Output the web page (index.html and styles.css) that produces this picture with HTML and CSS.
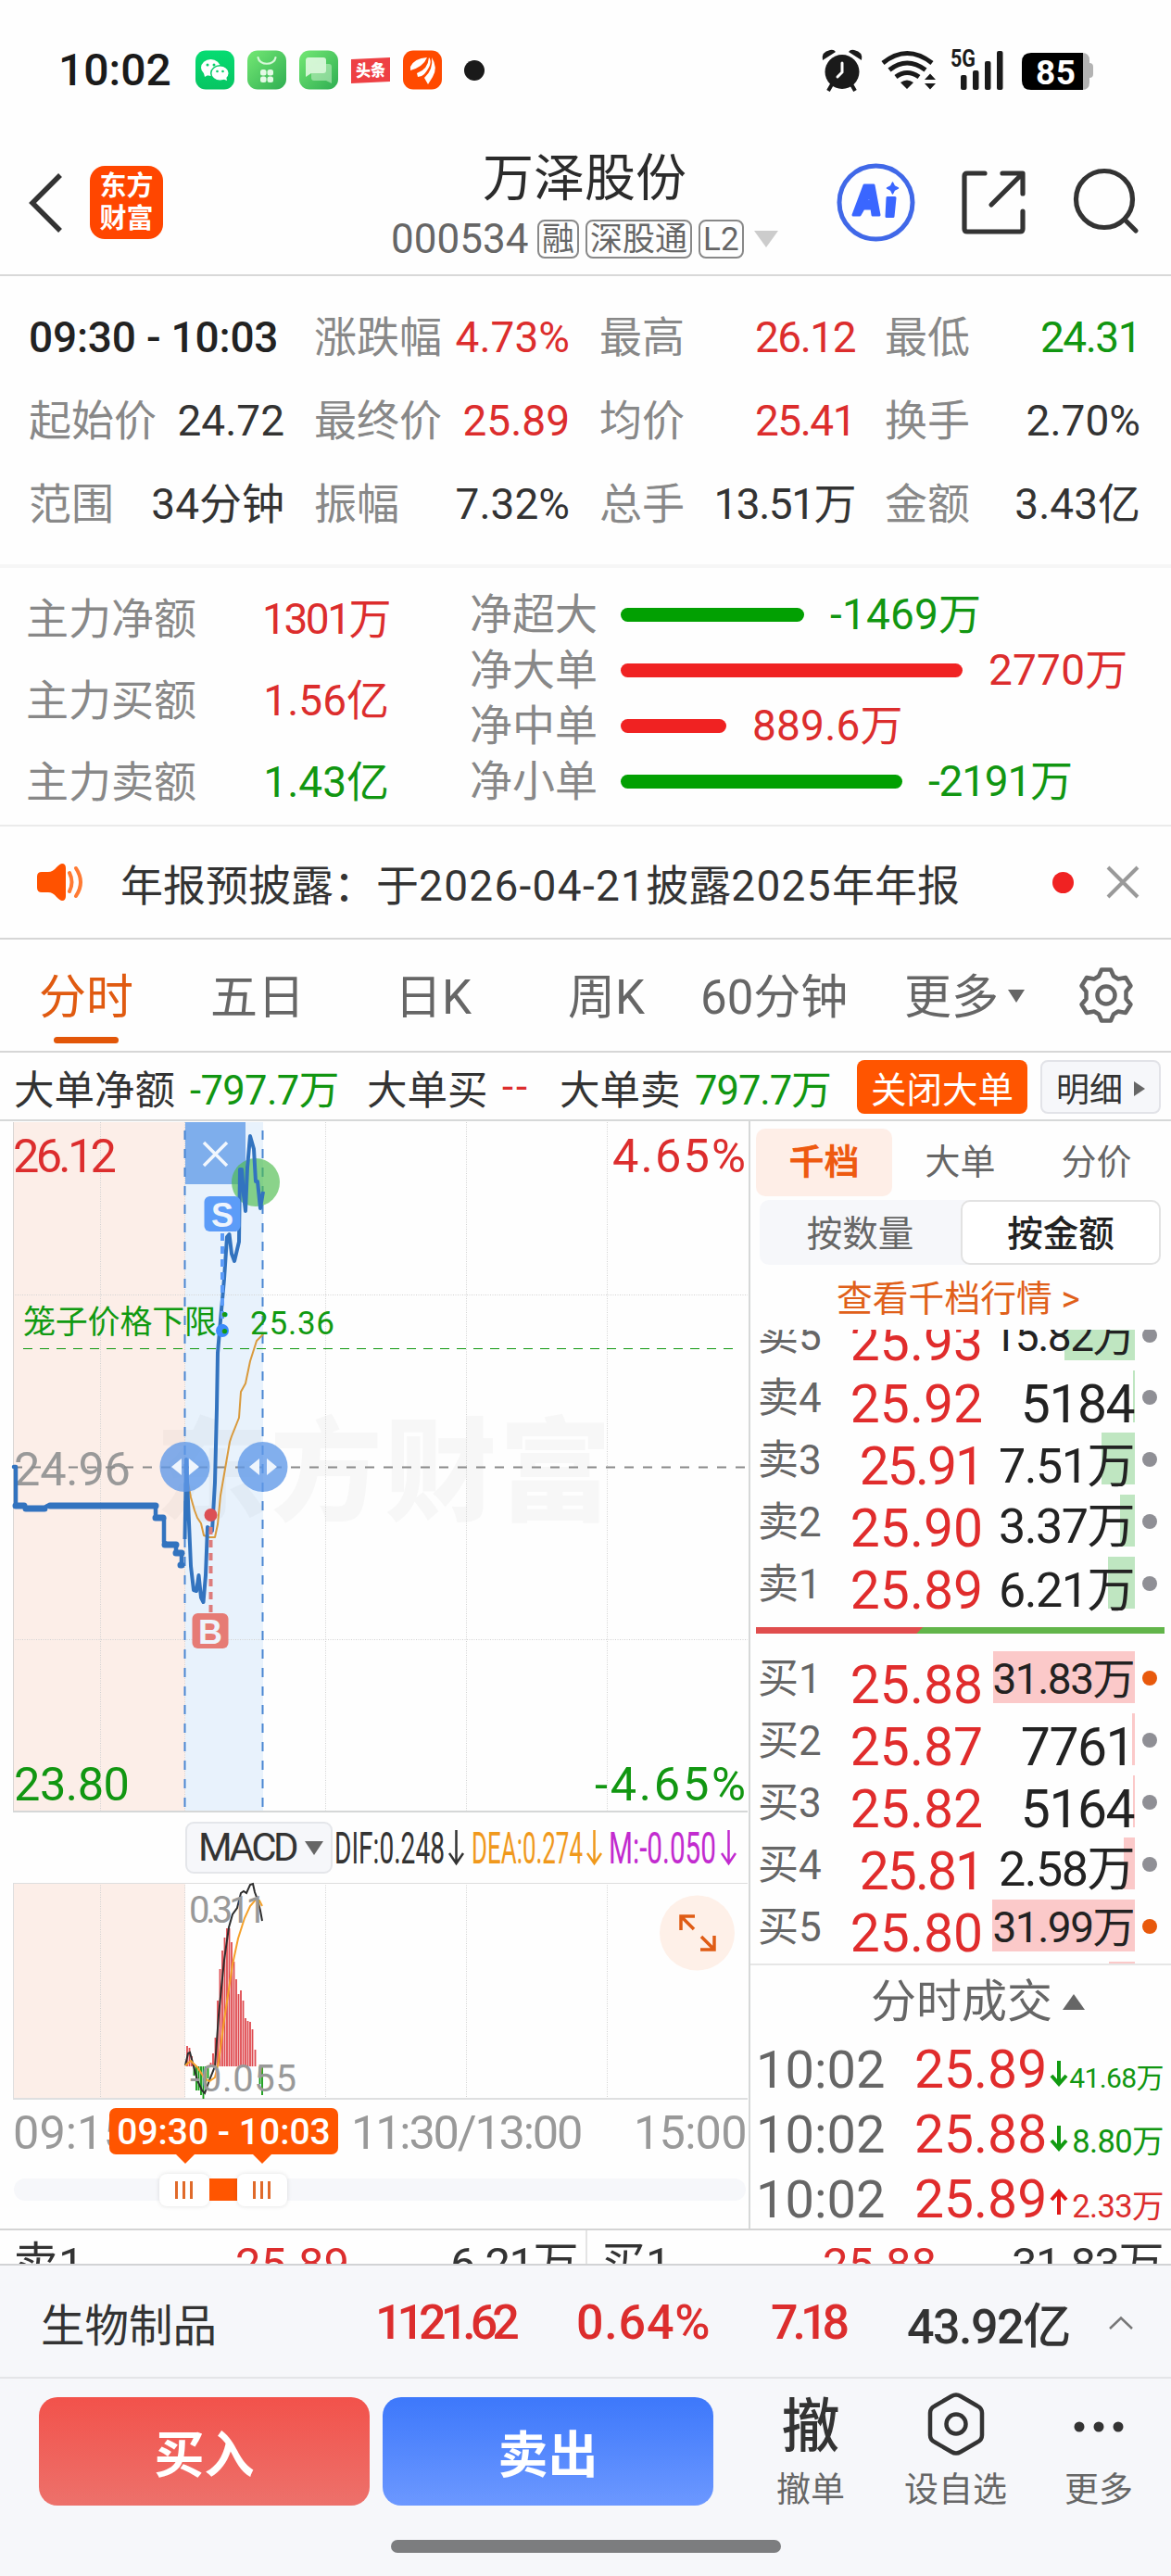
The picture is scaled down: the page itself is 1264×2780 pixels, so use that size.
FILE: index.html
```html
<!DOCTYPE html>
<html lang="zh-CN">
<head>
  <meta charset="UTF-8">
  <meta name="viewport" content="width=device-width, initial-scale=1.0">
  <title>万泽股份 000534</title>
  <link rel="stylesheet" href="styles.css">
</head>
<body>
  <!-- 状态栏 -->
  <div class="status">
    <span class="clock">10:02</span>
    <svg class="apps" width="312" height="44" viewBox="211 54 312 44">
      <defs>
        <linearGradient id="g1" x1="0" y1="0" x2="0" y2="1"><stop offset="0" stop-color="#06dc72"/><stop offset="1" stop-color="#07c562"/></linearGradient>
        <linearGradient id="g2" x1="0" y1="0" x2="1" y2="1"><stop offset="0" stop-color="#74e874"/><stop offset="1" stop-color="#2fae52"/></linearGradient>
      </defs>
      <rect x="211" y="54.500" width="42" height="42" rx="11" fill="url(#g1)"/>
      <g fill="#fff">
        <ellipse cx="227.500" cy="73" rx="10.500" ry="9"/>
        <path d="M220 79l1 4 5-3z"/>
        <ellipse cx="237.500" cy="79" rx="9.800" ry="8.200" stroke="#06cc69" stroke-width="1.500"/>
        <path d="M240 85l5 2-1-5z"/>
      </g>
      <g fill="#07cf6a"><circle cx="224" cy="70" r="1.500"/><circle cx="231" cy="70" r="1.500"/><circle cx="234.500" cy="77" r="1.300"/><circle cx="240.500" cy="77" r="1.300"/></g>
      <rect x="267" y="54.500" width="42" height="42" rx="11" fill="url(#g2)"/>
      <path d="M278.500 62c1.500 9 17.500 9 19 0" fill="none" stroke="#d6f7d8" stroke-width="2.200" stroke-linecap="round"/>
      <g fill="#e4f9e6"><rect x="281" y="75" width="6.500" height="6.500" rx="2.500"/><rect x="288.500" y="75" width="6.500" height="6.500" rx="2.500"/><rect x="281" y="82.500" width="6.500" height="6.500" rx="2.500"/><rect x="288.500" y="82.500" width="6.500" height="6.500" rx="2.500"/></g>
      <rect x="323" y="54.500" width="42" height="42" rx="11" fill="url(#g2)"/>
      <path d="M333 62h16q3 0 3 3v11q0 3-3 3h-13l-6 4V65q0-3 3-3z" fill="#e9fbe7" opacity=".85"/>
      <path d="M339 69h16q3 0 3 3v18l-6-3h-13q-3 0-3-3V72q0-3 3-3z" fill="#d5f5d6" opacity=".5"/>
      <path d="M379 64l42-2v26l-42 2z" fill="#ee4044"/>
      <text x="384" y="82.500" class="toutiao" textLength="32" lengthAdjust="spacingAndGlyphs" transform="rotate(-2 400 76)">头条</text>
      <rect x="435" y="54.500" width="42" height="42" rx="11" fill="#ff4a00"/>
      <path d="M443 72q4-9 18-10-4 10-18 14zM450 79q12-4 13-17 5 6-5 18-3 3-7 3zM458 84q10-9 8-22 7 11 1 21l-5 8z" fill="#fff"/>
      <circle cx="512" cy="76" r="11" fill="#1a1a1a"/>
    </svg>
    <svg class="signals" width="296" height="46" viewBox="886 53 296 46">
      <g fill="#1a1a1a">
        <circle cx="909" cy="77.500" r="18.500"/>
        <path d="M888 65q-2-9 8-11 4-1 6 2zM930 65q2-9-8-11-4-1-6 2z"/>
        <path d="M898 91l-4 7M919 91l4 7" stroke="#1a1a1a" stroke-width="4"/>
      </g>
      <path d="M909 68v10l-5 5" fill="none" stroke="#fff" stroke-width="3" stroke-linecap="round"/>
      <g fill="none" stroke="#1a1a1a" stroke-width="5">
        <path d="M953 68q26-21 53 0"/><path d="M960 75.500q19-15 39 0"/><path d="M967 83q12-9 25 0"/>
      </g>
      <path d="M972 89q7-5 14 0l-7 7zM998 86l6-6.500 6 6.500zM998 90h12l-6 6.500z" fill="#1a1a1a"/>
      <text x="1026" y="72" class="fiveg" textLength="27" lengthAdjust="spacingAndGlyphs">5G</text>
      <g fill="#1a1a1a"><rect x="1037" y="81" width="6.500" height="16" rx="2"/><rect x="1050" y="76" width="6.500" height="21" rx="2"/><rect x="1063" y="66" width="6.500" height="31" rx="2"/><rect x="1076" y="55" width="6.500" height="42" rx="2"/></g>
      <path d="M1160 57h8q8 0 8 8v3q4 0 4 4v8q0 4-4 4v5q0 8-8 8h-8z" fill="#b3b3b3"/>
      <path d="M1169 57h-56q-10 0-10 10v20q0 10 10 10h56z" fill="#000"/>
      <text x="1118" y="90.500" class="battery" textLength="43">85</text>
    </svg>
  </div>

  <!-- 标题栏 -->
  <header class="header">
    <svg class="back" width="40" height="66" viewBox="0 0 40 66"><path d="M35 3L5 33l30 30" fill="none" stroke="#333" stroke-width="5.500"/></svg>
    <div class="logo">东方<br>财富</div>
    <div class="title">
      <h1>万泽股份</h1>
      <div class="code">
        <span class="num">000534</span><i class="tag">融</i><i class="tag">深股通</i><i class="tag">L2</i>
        <svg width="26" height="18" viewBox="0 0 26 18"><path d="M0 0h26L13 18z" fill="#ccc"/></svg>
      </div>
    </div>
    <svg class="tools" width="330" height="86" viewBox="902 175 330 86">
      <circle cx="945.500" cy="218.500" r="39.500" fill="none" stroke="#4068e8" stroke-width="5"/>
      <g fill="#3a66ff" stroke="#3a66ff" stroke-width="3" stroke-linejoin="round">
        <path fill-rule="evenodd" d="M921 232l12-32h10l6 32h-7l-1-7h-9l-4 7zM935 217h5l-1-8z"/>
        <path d="M958 213.500h8l-2 20h-7z"/>
        <path d="M963.500 197l2 4 4 2-4 2-2 4-2-4-4-2 4-2z" stroke-width="1.500"/>
      </g>
      <g fill="none" stroke="#333" stroke-width="5.200" stroke-linecap="round" stroke-linejoin="round">
        <path d="M1063 187h-19q-3 0-3 3v57q0 3 3 3h57q3 0 3-3v-19M1082 187h22v22M1103 188l-33 33"/>
        <circle cx="1192" cy="215" r="30.500"/><path d="M1214 237l12 12"/>
      </g>
    </svg>
  </header>

  <!-- 区间统计 -->
  <section class="stats">
    <div><b>09:30 - 10:03</b></div>
    <div><label>涨跌幅</label><span class="up">4.73%</span></div>
    <div><label>最高</label><span class="up one">26.12</span></div>
    <div><label>最低</label><span class="down one">24.31</span></div>
    <div><label>起始价</label><span>24.72</span></div>
    <div><label>最终价</label><span class="up">25.89</span></div>
    <div><label>均价</label><span class="up one">25.41</span></div>
    <div><label>换手</label><span>2.70%</span></div>
    <div><label>范围</label><span>34分钟</span></div>
    <div><label>振幅</label><span>7.32%</span></div>
    <div><label>总手</label><span class="one">13.51万</span></div>
    <div><label>金额</label><span>3.43亿</span></div>
  </section>

  <!-- 资金流向 -->
  <section class="funds">
    <div class="main-force">
      <div><label>主力净额</label><span class="up ones">1301万</span></div>
      <div><label>主力买额</label><span class="up">1.56亿</span></div>
      <div><label>主力卖额</label><span class="down">1.43亿</span></div>
    </div>
    <div class="net">
      <div><label>净超大</label><i class="bg-down" style="width:198px"></i><span class="down">-1469万</span></div>
      <div><label>净大单</label><i class="bg-up" style="width:369px"></i><span class="up">2770万</span></div>
      <div><label>净中单</label><i class="bg-up" style="width:114px"></i><span class="up">889.6万</span></div>
      <div><label>净小单</label><i class="bg-down" style="width:304px"></i><span class="down ones">-2191万</span></div>
    </div>
  </section>

  <!-- 公告 -->
  <div class="notice">
    <svg width="54" height="42" viewBox="39 931 54 42"><path d="M45 941h7q5 0 9-5 4-4 6-4 4 0 4 5v30q0 5-4 5-2 0-6-4-4-5-9-5h-7q-5 0-5-5v-12q0-5 5-5z" fill="#ff5200"/><path d="M75 942q5 10 0 20M82 937q10 15 0 30" fill="none" stroke="#ff7a33" stroke-width="4" stroke-linecap="round"/></svg>
    <p>年报预披露：于<span>2026-04-21</span>披露<span>2025</span>年年报</p>
    <i class="dot"></i>
    <svg width="36" height="36" viewBox="0 0 36 36"><path d="M2 2l32 32M34 2L2 34" stroke="#999" stroke-width="4"/></svg>
  </div>

  <!-- 周期切换 -->
  <nav class="periods">
    <a class="active">分时</a><a>五日</a><a>日K</a><a>周K</a><a>60分钟</a>
    <a>更多<svg width="18" height="14" viewBox="0 0 18 14"><path d="M0 0h18L9 14z" fill="#666"/></svg></a>
    <svg class="gear" width="62" height="62" viewBox="-31 -31 62 62">
      <path d="M-5-27.500H5L8-20.500L13-17.500L21-19L26.500-10L21.500-4V4L26.500 10L21 19L13 17.500L8 20.500L5 27.500H-5L-8 20.500L-13 17.500L-21 19L-26.500 10L-21.500 4V-4L-26.500-10L-21-19L-13-17.500L-8-20.500Z" fill="none" stroke="#666" stroke-width="4.500" stroke-linejoin="round"/>
      <circle r="9.500" fill="none" stroke="#666" stroke-width="4.500"/>
    </svg>
  </nav>

  <!-- 大单统计 -->
  <div class="bigorder">
    <span>大单净额</span><span class="down">-797.7万</span>
    <span>大单买</span><span class="up">--</span>
    <span>大单卖</span><span class="down">797.7万</span>
    <button class="close-big">关闭大单</button>
    <button class="detail">明细<svg width="12" height="16" viewBox="0 0 12 16"><path d="M0 0l12 8-12 8z" fill="#666"/></svg></button>
  </div>

  <main class="board">
    <div class="charts">
      <!-- 分时图 -->
      <svg class="block" width="808" height="747" viewBox="0 1210 808 747">
        <rect x="14" y="1211" width="186" height="744" fill="#fceee8"/>
        <rect x="200" y="1211" width="84" height="744" fill="#e8f2fc"/>
        <text x="168" y="1631" class="watermark" textLength="492">东方财富</text>
        <g stroke="#d2d2d2" stroke-width="1" stroke-dasharray="1 1.500">
          <path d="M108.500 1211V1955M199.500 1211V1955M351.500 1211V1955M503.500 1211V1955M655.500 1211V1955M14 1397.500H807M14 1769.500H807"/>
        </g>
        <path d="M14.500 1211V1955" stroke="#d8d5d4"/>
        <path d="M14 1955H807" stroke="#d5d7d7" stroke-width="2"/>
        <text x="15" y="1603" class="axis muted" textLength="126">24.96</text>
        <path d="M14 1583.500H805" stroke="#8a8a8a" stroke-width="2" stroke-dasharray="10 10"/>
        <path d="M25 1455.500H793" stroke="#109810" stroke-width="1.200" stroke-dasharray="10 8"/>
        <rect x="200" y="1211" width="65" height="67" fill="#7eaeec"/>
        <path d="M220 1233l25 25M245 1233l-25 25" stroke="#f2f7fd" stroke-width="3.500"/>
        <path d="M199.500 1200V1955M283.500 1200V1955" stroke="#4a86d2" stroke-width="2" stroke-dasharray="10 10"/>
        <circle cx="276" cy="1276" r="26" fill="#4bbb4b" fill-opacity=".65"/>
        <g fill="none" stroke-linejoin="round">
          <path d="M15 1583H17V1625H25L28 1628H47L51 1625H168V1638H177V1664L181 1667H190V1676H196V1689" stroke="#3273bf" stroke-width="4.500" stroke-linecap="round"/>
          <path d="M54 1625H168" stroke="#3273bf" stroke-width="7" stroke-linecap="round"/>
          <path d="M17 1625h9M28 1628h20M168 1638h8M178 1667h12M190 1676h6M195 1689h1" stroke="#3273bf" stroke-width="7" stroke-linecap="round"/>
          <path d="M201 1590L206 1616L210 1630L213 1638L217 1644L220 1657L226 1659H232L235 1645L238 1614L243 1585L248 1556L250 1550L256 1535L258 1530L260 1502L265 1493L270 1469L277 1447L284 1440" stroke="#d99a3c" stroke-width="2"/>
          <path d="M199.500 1661L201 1575L203 1620L206 1690L209 1716L212 1717L214.500 1700L217 1724L219.500 1729L222 1700L224 1648L229 1652L232 1600L234 1520L235 1460L238 1425L242 1380L245 1335L247.500 1332L250 1353L253 1361L258 1340L259 1262H261L263 1290L265 1307L267 1260L270 1226L274 1240L276 1275H278L281 1304L284 1286" stroke="#3273bf" stroke-width="4"/>
        </g>
        <path d="M240 1331V1430" stroke="#5c9cf8" stroke-width="4" stroke-dasharray="8 6"/>
        <circle cx="240" cy="1436" r="7" fill="#3c8bfb"/>
        <rect x="220.500" y="1291" width="39" height="38" rx="6" fill="#5c9cf8"/>
        <text x="240" y="1323.500" class="badge">S</text>
        <path d="M227.500 1740V1642" stroke="#dd7c7c" stroke-width="4" stroke-dasharray="8 6"/>
        <circle cx="227.500" cy="1635" r="7" fill="#dc4f55"/>
        <rect x="207.500" y="1741" width="39" height="38" rx="6" fill="#e67b75"/>
        <text x="227" y="1773.500" class="badge">B</text>
        <g fill="#5f98e8" fill-opacity=".78"><circle cx="199.500" cy="1583" r="27"/><circle cx="283.500" cy="1583" r="27"/></g>
        <path d="M196 1574v18l-11-9zM204 1574v18l11-9zM280 1574v18l-11-9zM288 1574v18l11-9z" fill="#eef5fd"/>
        <text x="25" y="1439" class="cage" textLength="209">笼子价格下限</text>
        <text x="234" y="1439" class="cage">：</text>
        <text x="270" y="1440" class="cage" textLength="91">25.36</text>
        <text x="14" y="1265" class="axis up" textLength="112">26.12</text>
        <text x="15" y="1943" class="axis down" textLength="125">23.80</text>
        <text x="661" y="1265" class="axis up" textLength="144">4.65%</text>
        <text x="642" y="1943" class="axis down" textLength="163">-4.65%</text>
      </svg>

      <div class="macd-bar">
        <div class="picker"><span>MACD</span><svg width="20" height="15" viewBox="0 0 20 15"><path d="M0 0h20L10 15z" fill="#666"/></svg></div>
        <svg width="445" height="56" viewBox="360 1965 445 56">
          <g class="macd-num">
            <text x="362" y="2010" fill="#333" textLength="119" lengthAdjust="spacingAndGlyphs">DIF:0.248</text>
            <text x="510" y="2010" fill="#f0991c" textLength="120" lengthAdjust="spacingAndGlyphs">DEA:0.274</text>
            <text x="658" y="2010" fill="#c22bcf" textLength="116" lengthAdjust="spacingAndGlyphs">M:-0.050</text>
          </g>
          <g fill="none" stroke-width="2.500">
            <path d="M493.500 1974V2009M486 1999L493.500 2010L501 1999" stroke="#333"/>
            <path d="M642.500 1974V2009M635 1999L642.500 2010L650 1999" stroke="#f0991c"/>
            <path d="M787.500 1974V2009M780 1999L787.500 2010L795 1999" stroke="#c22bcf"/>
          </g>
        </svg>
      </div>

      <!-- MACD 副图 -->
      <svg class="block" width="808" height="236" viewBox="0 2031 808 236">
        <rect x="14" y="2032" width="186" height="233" fill="#fceee8"/>
        <path d="M108.500 2032V2265M199.500 2032V2265M351.500 2032V2265M503.500 2032V2265M655.500 2032V2265" stroke="#d2d2d2" stroke-dasharray="1 1.500"/>
        <path d="M14 2032.500H807M14.500 2032V2265" stroke="#dedede"/>
        <path d="M14 2265H807" stroke="#dedfe0" stroke-width="2"/>
        <path stroke="#df4a4f" stroke-width="1.800" d="M202 2230V2208M204.500 2230V2210M207 2230V2219M227.500 2230V2226M230 2230V2216M232.500 2230V2199M235 2230V2159M237.500 2230V2125M240 2230V2105M242.500 2230V2091M245 2230V2081M247.500 2230V2081M250 2230V2096M252.500 2230V2117M255 2230V2136M257.500 2230V2152M260 2230V2148M262.500 2230V2159M265 2230V2178M267.500 2230V2181M270 2230V2182M272.500 2230V2190M275.500 2230V2212"/>
        <path stroke="#119a11" stroke-width="1.800" d="M209.500 2230V2240M212 2230V2256M214.500 2230V2256M217 2230V2261M219.500 2230V2265M222 2230V2254M224.500 2230V2243M280.500 2230V2249M283 2230V2261"/>
        <path d="M200 2229L203 2216L205 2215L208 2226L213 2245L218 2256L221 2259L226 2245L232 2230L236 2175L242 2115L247 2080L251 2066L256 2059L260 2043L263 2041L266 2043L270 2034L273 2033L275 2042L278 2050L281 2062L283 2073" fill="none" stroke="#2d2d2d" stroke-width="2"/>
        <path d="M200 2229L206 2224L213 2231L221 2243L226 2246L232 2242L236 2225L242 2180L251 2120L257 2092L264 2070L270 2057L276 2050L280 2051L283 2057" fill="none" stroke="#f5a12b" stroke-width="2"/>
        <text x="204" y="2075" class="subaxis" textLength="84">0.311</text>
        <text x="205" y="2257" class="subaxis" textLength="115">-0.055</text>
        <circle cx="752.500" cy="2086" r="40.500" fill="#fef0e8"/>
        <path d="M735 2083V2068H750M736 2069L749 2082M771 2089V2104H756M770 2103L757 2090" fill="none" stroke="#df5c15" stroke-width="3.500"/>
      </svg>

      <div class="times">
        <span class="t1">09:15</span><span class="t2">11:30/13:00</span><span class="t3">15:00</span>
        <div class="tip">09:30 - 10:03</div>
      </div>
      <div class="slider"><i class="grip"></i><i class="fill"></i><i class="grip"></i></div>
    </div>

    <!-- 盘口 -->
    <aside class="depth">
      <div class="tabs"><b>千档</b><span>大单</span><span>分价</span></div>
      <div class="segment"><span>按数量</span><b>按金额</b></div>
      <a class="link">查看千档行情 &gt;</a>
      <div class="book sell">
        <div class="row"><label>卖5</label><em>25.93</em><span class="s"><i style="width:76px"></i><u>15.82万</u></span><s></s></div>
        <div class="row"><label>卖4</label><em>25.92</em><span><i style="width:2px"></i><u>5184</u></span><s></s></div>
        <div class="row"><label>卖3</label><em class="one">25.91</em><span class="m l"><i style="width:36px"></i><u>7.51万</u></span><s></s></div>
        <div class="row"><label>卖2</label><em>25.90</em><span class="m"><i style="width:16px"></i><u>3.37万</u></span><s></s></div>
        <div class="row"><label>卖1</label><em>25.89</em><span class="m l"><i style="width:29px"></i><u>6.21万</u></span><s></s></div>
      </div>
      <div class="ratio"></div>
      <div class="book buy">
        <div class="row"><label>买1</label><em>25.88</em><span class="s"><i style="width:153px"></i><u>31.83万</u></span><s class="hot"></s></div>
        <div class="row"><label>买2</label><em>25.87</em><span><i style="width:3px"></i><u>7761</u></span><s></s></div>
        <div class="row"><label>买3</label><em>25.82</em><span><i style="width:2px"></i><u>5164</u></span><s></s></div>
        <div class="row"><label>买4</label><em class="one">25.81</em><span class="m"><i style="width:12px"></i><u>2.58万</u></span><s></s></div>
        <div class="row"><label>买5</label><em>25.80</em><span class="s"><i style="width:154px"></i><u>31.99万</u></span><s class="hot"></s></div>
        <div class="row"><label></label><em></em><span><i style="width:28px"></i></span></div>
      </div>
      <div class="trades">
        <h2>分时成交<svg width="24" height="17" viewBox="0 0 24 17"><path d="M0 17h24L12 0z" fill="#666"/></svg></h2>
        <div><label>10:02</label><em>25.89</em><svg width="20" height="28" viewBox="0 0 20 28"><path d="M10 0V25M2 16L10 25L18 16" fill="none" stroke="#119a11" stroke-width="4"/></svg><span class="down xs">41.68万</span></div>
        <div><label>10:02</label><em>25.88</em><svg width="20" height="28" viewBox="0 0 20 28"><path d="M10 0V25M2 16L10 25L18 16" fill="none" stroke="#119a11" stroke-width="4"/></svg><span class="down">8.80万</span></div>
        <div><label>10:02</label><em>25.89</em><svg width="20" height="28" viewBox="0 0 20 28"><path d="M10 28V3M2 12L10 3L18 12" fill="none" stroke="#e01818" stroke-width="4"/></svg><span class="up">2.33万</span></div>
      </div>
    </aside>
  </main>

  <div class="best">
    <div><span>卖1</span><em>25.89</em><span>6.21万</span></div>
    <div><span>买1</span><em>25.88</em><span>31.83万</span></div>
  </div>

  <!-- 底部 -->
  <footer class="footer">
    <div class="sector">
      <span class="name">生物制品</span>
      <b class="up idx">1121.62</b><b class="up pct">0.64%</b><b class="up chg">7.18</b><b class="amt">43.92亿</b>
      <svg width="28" height="16" viewBox="0 0 28 16"><path d="M2 14L14 2.500L26 14" fill="none" stroke="#777" stroke-width="2.500"/></svg>
    </div>
    <div class="actions">
      <button class="buy-btn">买入</button>
      <button class="sell-btn">卖出</button>
      <div class="act a1"><strong>撤</strong><small>撤单</small></div>
      <div class="act a2">
        <svg width="62" height="68" viewBox="-31 -34 62 68"><path d="M-5-30Q0-33 5-30L23-19.500Q28-17 28-12V12Q28 17 23 19.500L5 30Q0 33-5 30L-23 19.500Q-28 17-28 12V-12Q-28-17-23-19.500Z" fill="none" stroke="#333" stroke-width="4.500"/><circle r="10.500" fill="none" stroke="#333" stroke-width="4.500"/></svg>
        <small>设自选</small>
      </div>
      <div class="act a3">
        <svg width="56" height="68" viewBox="0 -34 56 68"><g fill="#333"><circle cx="7" cy="3" r="5.500"/><circle cx="28" cy="3" r="5.500"/><circle cx="49" cy="3" r="5.500"/></g></svg>
        <small>更多</small>
      </div>
    </div>
    <div class="home"></div>
  </footer>
</body>
</html>
```
FILE: styles.css
```css
* {
  box-sizing: border-box;
}
body {
  margin: 0;
  width: 1264px;
  height: 2780px;
  background: #fefefe;
  color: #333;
  font-family: Roboto, "Noto Sans CJK SC", sans-serif;
  font-size: 46px;
}
i, em {
  font-style: normal;
}
u, s {
  text-decoration: none;
}
svg {
  flex: none;
}
.block {
  display: block;
}
label {
  color: #888;
}
.up {
  color: #dc2d2d;
  fill: #dc2d2d;
}
.down {
  color: #119611;
  fill: #119611;
}
.bg-up {
  background: #f02222;
}
.bg-down {
  background: #02a002;
}
button {
  border: none;
  padding: 0;
  font-family: inherit;
}

/* 状态栏 */
.status {
  height: 152px;
  padding-top: 53px;
  display: flex;
}
.clock {
  width: 211px;
  padding-left: 63px;
  font-size: 48px;
  font-weight: 500;
  line-height: 46px;
  color: #1a1a1a;
}
.apps {
  margin-top: 1px;
}
.signals {
  margin-left: 363px;
}
.toutiao {
  font-size: 18px;
  font-weight: 900;
  fill: #fff;
}
.fiveg {
  font-size: 25px;
  font-weight: 700;
  fill: #1a1a1a;
}
.battery {
  font-size: 37px;
  font-weight: 700;
  fill: #fff;
}

/* 标题栏 */
.header {
  height: 146px;
  display: flex;
  border-bottom: 2px solid #d8d8d8;
}
.back {
  margin: 34px 0 0 30px;
}
.logo {
  margin: 27px 0 0 27px;
  width: 79px;
  height: 79px;
  padding-top: 5px;
  border-radius: 16px;
  background: #ff4600;
  color: #fff;
  font-size: 29px;
  font-weight: 700;
  line-height: 35px;
  text-align: center;
}
.title {
  margin-left: 246px;
  width: 426px;
}
.title h1 {
  margin: 10px 0 0 99px;
  font-size: 55px;
  font-weight: 400;
  line-height: 60px;
  color: #2b2b2b;
}
.code {
  display: flex;
  align-items: center;
  margin-top: 15px;
  height: 42px;
}
.code .num {
  font-size: 44px;
  color: #666;
  width: 158px;
}
.tag {
  height: 42px;
  margin-right: 7px;
  padding: 0 3px;
  border: 2px solid #888;
  border-radius: 8px;
  font-size: 35px;
  line-height: 39px;
  color: #666;
}
.code svg {
  margin-left: 4px;
}
.tools {
  margin: 23px 0 0 54px;
}

/* 区间统计 */
.stats {
  height: 315px;
  padding: 21px 34px 0 31px;
  display: grid;
  grid-template-columns: repeat(4, 276px);
  grid-auto-rows: 90px;
  column-gap: 32px;
  border-bottom: 4px solid #f6f6f6;
}
.stats div {
  display: flex;
  justify-content: space-between;
  line-height: 90px;
  white-space: nowrap;
}
.stats b {
  font-weight: 500;
  letter-spacing: -.2px;
  color: #222;
}
.stats .one {
  letter-spacing: -1.500px;
}

/* 资金流向 */
.funds {
  height: 279px;
  display: flex;
  border-bottom: 2px solid #ebebeb;
}
.main-force {
  width: 507px;
  padding: 11px 87px 0 28px;
}
.main-force div {
  height: 88px;
  line-height: 88px;
  display: flex;
  justify-content: space-between;
}
.ones {
  letter-spacing: -2.500px;
}
.net {
  padding-top: 20px;
}
.net div {
  height: 60px;
  line-height: 62px;
  display: flex;
  align-items: center;
}
.net label {
  width: 163px;
}
.net i {
  height: 15px;
  border-radius: 8px;
  margin-right: 28px;
}
.net span {
  letter-spacing: .2px;
}
.net .ones {
  letter-spacing: -1.200px;
}

/* 公告 */
.notice {
  height: 122px;
  padding: 0 34px 0 39px;
  display: flex;
  align-items: center;
  border-bottom: 2px solid #d6d6d6;
}
.notice p {
  margin: 0 0 0 37px;
  width: 1007px;
  white-space: nowrap;
}
.notice p span {
  letter-spacing: 1.300px;
}
.notice .dot {
  width: 23px;
  height: 23px;
  border-radius: 50%;
  background: #f02222;
  margin-right: 35px;
}

/* 周期 */
.periods {
  height: 122px;
  display: flex;
  align-items: center;
  border-bottom: 2px solid #d6d6d6;
  font-size: 51px;
  color: #666;
}
.periods a {
  position: relative;
  line-height: 120px;
  padding-top: 5px;
  white-space: nowrap;
  width: 189px;
  padding-left: 2px;
}
.periods a:nth-child(1) {
  width: 225px;
  padding-left: 42px;
}
.periods a:nth-child(2) {
  width: 199px;
}
.periods a:nth-child(4) {
  width: 142px;
  padding-left: 0;
}
.periods a:nth-child(5) {
  width: 221px;
  padding-left: 1px;
}
.periods a:nth-child(6) {
  width: 187px;
  padding-left: 0;
}
.periods a svg {
  margin-left: 10px;
  vertical-align: 12px;
}
.periods .active {
  color: #e05a10;
}
.periods .active::after {
  content: "";
  position: absolute;
  left: 58px;
  bottom: 11px;
  width: 70px;
  height: 7px;
  border-radius: 4px;
  background: #e25608;
}

/* 大单 */
.bigorder {
  height: 74px;
  padding: 2px 11px 0 15px;
  display: flex;
  align-items: center;
  border-bottom: 2px solid #d6d8d8;
  font-size: 43.500px;
  white-space: nowrap;
}
.bigorder span:nth-child(1) { width: 190px; }
.bigorder span:nth-child(2) { width: 191px; letter-spacing: -.6px; }
.bigorder span:nth-child(3) { width: 146px; }
.bigorder span:nth-child(4) { width: 62px; letter-spacing: 3px; }
.bigorder span:nth-child(5) { width: 146px; }
.bigorder span:nth-child(6) { width: 175px; letter-spacing: -1px; }
.bigorder button {
  height: 58px;
  border-radius: 8px;
  font-size: 38.500px;
}
.close-big {
  width: 184px;
  background: #ff5500;
  color: #fff;
}
.bigorder .detail {
  width: 130px;
  margin-left: 14px;
  background: #f6f7fa;
  border: 2px solid #e2e3e8;
  font-size: 36px;
  color: #333;
}
.detail svg {
  margin-left: 12px;
  vertical-align: 6px;
}

/* 图表 */
.board {
  height: 1197px;
  display: flex;
  border-bottom: 2px solid #d4d4d4;
  overflow: hidden;
}
.charts {
  width: 808px;
}
.watermark {
  font-size: 121px;
  font-weight: 900;
  fill: #000;
  fill-opacity: .028;
}
.axis {
  font-size: 50.500px;
}
.muted {
  fill: #999;
}
.badge {
  font-size: 36px;
  font-weight: 700;
  font-family: "Liberation Sans", Arial, sans-serif;
  fill: #eef4fd;
  text-anchor: middle;
}
.cage {
  font-size: 35px;
  fill: #119a11;
}
.subaxis {
  font-size: 40px;
  fill: #999;
}
.macd-bar {
  height: 74px;
  padding-left: 200px;
  display: flex;
  align-items: center;
}
.picker {
  width: 159px;
  height: 56px;
  padding-left: 12px;
  border: 2px solid #e4e6ea;
  border-radius: 9px;
  background: #f6f7fa;
  display: flex;
  align-items: center;
}
.picker span {
  width: 115px;
  font-size: 42px;
  line-height: 50px;
  letter-spacing: -3.500px;
}
.macd-num {
  font-size: 48px;
}
.times {
  position: relative;
  height: 68px;
  display: flex;
  font-size: 50.500px;
  line-height: 69px;
  color: #999;
}
.t1 {
  width: 379px;
  padding-left: 14px;
}
.t2 {
  width: 305px;
  letter-spacing: -2.200px;
}
.t3 {
  letter-spacing: -.8px;
}
.tip {
  position: absolute;
  left: 118px;
  top: 8px;
  width: 247px;
  height: 50px;
  border-radius: 7px;
  background: #ff5500;
  color: #fff;
  font-size: 39px;
  font-weight: 500;
  line-height: 52px;
  text-align: center;
  white-space: nowrap;
}
.tip::before, .tip::after {
  content: "";
  position: absolute;
  top: 49px;
  left: 71px;
  border: 11px solid transparent;
  border-top-color: #ff5500;
  border-bottom: none;
}
.tip::after {
  left: 154px;
}
.slider {
  margin: 16px 0 0 15px;
  width: 790px;
  height: 24px;
  border-radius: 12px;
  background: #f6f7fa;
  display: flex;
  align-items: center;
  padding-left: 157px;
}
.grip {
  width: 54px;
  height: 35px;
  border-radius: 8px;
  box-shadow: 0 0 5px rgba(0, 0, 0, .12);
  background: linear-gradient(90deg, #e06a2a 3px, transparent 3px 8px, #e06a2a 8px 11px, transparent 11px 16px, #e06a2a 16px 19px, transparent 19px) 17px 8px / 20px 19px no-repeat, #fff;
}
.fill {
  width: 30px;
  height: 24px;
  background: #ff5500;
}

/* 盘口 */
.depth {
  width: 456px;
  border-left: 2px solid #d6d8d8;
}
.tabs {
  margin: 8px 5px 0 6px;
  display: grid;
  grid-template-columns: repeat(3, 147px);
  height: 70px;
  line-height: 73px;
  text-align: center;
  font-size: 38px;
  color: #666;
}
.tabs b {
  background: #feeee7;
  border-radius: 10px;
  color: #ee5a10;
}
.segment {
  margin: 7px 11px 0 10px;
  width: 433px;
  height: 70px;
  display: flex;
  border-radius: 10px;
  background: #f6f7fa;
  text-align: center;
  font-size: 38.500px;
  line-height: 74px;
  color: #666;
}
.segment span {
  width: 217px;
}
.segment b {
  width: 216px;
  line-height: 70px;
  border: 2px solid #e2e2e2;
  border-radius: 10px;
  background: #fff;
  font-weight: 500;
  color: #222;
}
.link {
  display: block;
  height: 70px;
  line-height: 73px;
  padding-left: 93px;
  font-size: 38.800px;
  color: #e0601a;
}
.book {
  overflow: hidden;
  height: 321px;
}
.sell .row:first-child {
  margin-top: -23px;
}
.buy {
  height: 337px;
}
.row {
  height: 56px;
  margin-bottom: 11px;
  display: flex;
  padding-left: 8px;
}
.row label {
  width: 78px;
  font-size: 44px;
  line-height: 60px;
  color: #666;
}
.row em {
  width: 165px;
  font-size: 57px;
  line-height: 73px;
  text-align: right;
  color: #e02c2c;
}
.row em.one {
  letter-spacing: -2px;
}
.row span {
  position: relative;
  width: 164px;
  font-size: 57px;
  line-height: 73px;
  text-align: right;
  white-space: nowrap;
  color: #222;
}
.row u {
  position: relative;
  margin-right: 1px;
  letter-spacing: -1.500px;
}
.row .m {
  font-size: 52px;
  line-height: 69px;
}
.row .l {
  line-height: 73px;
}
.row .s {
  font-size: 46px;
  line-height: 60px;
}
.row i {
  position: absolute;
  right: 0;
  top: 0;
  height: 56px;
  background: #bfe6c1;
}
.buy i {
  background: #fbc9c9;
}
.row s {
  width: 16px;
  height: 16px;
  margin: 21px 0 0 8px;
  border-radius: 50%;
  background: #8f8f95;
}
.row .hot {
  background: #e8590c;
}
.ratio {
  width: 441px;
  height: 7px;
  margin: 0 0 19px 6px;
  background: linear-gradient(135deg, #e04d4d 127px, #62b54a 128px) no-repeat;
}
.trades {
  border-top: 2px solid #e6e6e6;
}
.trades h2 {
  margin: 0;
  height: 78px;
  padding-left: 130px;
  font-size: 49px;
  font-weight: 400;
  line-height: 80px;
  color: #666;
}
.trades h2 svg {
  margin: 0 0 0 11px;
  vertical-align: 8px;
}
.trades div {
  display: flex;
  height: 70px;
  line-height: 70px;
  padding: 0 8px 0 6px;
  white-space: nowrap;
}
.trades label {
  width: 171px;
  font-size: 56px;
  color: #666;
}
.trades em {
  width: 146px;
  font-size: 57px;
  color: #e02c2c;
}
.trades div svg {
  margin-top: 25px;
}
.trades div:last-child svg {
  margin-top: 23px;
}
.trades span {
  flex: 1;
  text-align: right;
  font-size: 34.500px;
  line-height: 84px;
  letter-spacing: -.6px;
}
.trades .xs {
  font-size: 30px;
  line-height: 87px;
}

/* 买一卖一 */
.best {
  height: 36px;
  display: flex;
  overflow: hidden;
}
.best div {
  width: 632px;
  padding: 0 9px 0 14px;
  display: flex;
  font-size: 49px;
  line-height: 73px;
  white-space: nowrap;
}
.best div + div {
  border-left: 2px solid #e4e4e4;
}
.best span:first-child {
  width: 240px;
}
.best em {
  color: #dc2d2d;
}
.best span:last-child {
  flex: 1;
  text-align: right;
  letter-spacing: -1.500px;
}

/* 底部 */
.footer {
  height: 337px;
  background: #f6f7fa;
  border-top: 2px solid #d2d3d5;
}
.sector {
  height: 122px;
  display: flex;
  align-items: center;
  border-bottom: 2px solid #e4e5e8;
  padding: 3px 0 0 44px;
  font-size: 52px;
  white-space: nowrap;
}
.sector b {
  font-weight: 500;
}
.sector .name {
  width: 361px;
  font-size: 47.500px;
}
.sector .idx {
  width: 217px;
  letter-spacing: -6px;
}
.sector .pct {
  width: 210px;
  letter-spacing: .8px;
}
.sector .chg {
  width: 147px;
  letter-spacing: -6px;
}
.sector .amt {
  width: 217px;
  letter-spacing: -1.500px;
}
.actions {
  height: 174px;
  display: flex;
  padding: 20px 0 0 42px;
}
.actions button {
  width: 357px;
  height: 117px;
  margin-right: 14px;
  border-radius: 20px;
  color: #fff;
  font-size: 54px;
  font-weight: 700;
}
.buy-btn {
  background: linear-gradient(#f2524b, #ed716b);
}
.sell-btn {
  background: linear-gradient(#3d78fb, #6c98ff);
}
.act {
  margin-top: -5px;
  display: flex;
  flex-direction: column;
  align-items: center;
}
.act strong {
  height: 68px;
  line-height: 74px;
  font-size: 63px;
  font-weight: 500;
}
.act small {
  margin-top: 11px;
  font-size: 37px;
  line-height: 54px;
  color: #666;
}
.a1 {
  margin-left: 54px;
}
.a2 {
  margin-left: 64px;
}
.a3 {
  margin-left: 62px;
}
.home {
  width: 421px;
  height: 14px;
  margin-left: 422px;
  border-radius: 7px;
  background: #7c7d7f;
}
```
